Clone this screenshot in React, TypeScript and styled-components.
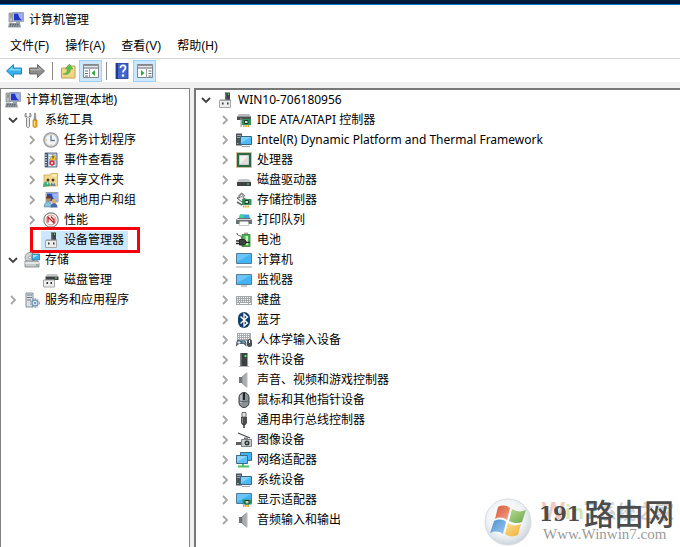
import React, { useState } from 'react';
import styled, { createGlobalStyle, css } from 'styled-components';

const Global = createGlobalStyle`
  *, *::before, *::after { box-sizing: border-box; }
  body {
    margin: 0;
    background: #f0f0f0;
    color: #000;
    font: 12px/20px "Noto Sans", "Noto Sans CJK SC", sans-serif;
  }
  button { font: inherit; color: inherit; border: 0; background: none; padding: 0; margin: 0; }
  ul { list-style: none; margin: 0; padding: 0; }
  h1 { font: inherit; margin: 0; }
`;

const Window = styled.div`
  position: relative;
  display: flex;
  flex-direction: column;
  min-height: 100vh;
  overflow: hidden;
`;

const Desktop = styled.div`
  height: 5px;
  background: #001a3c;
  border-bottom: 1px solid #0c7cd5;
`;

const TitleBar = styled.header`
  display: flex;
  align-items: center;
  gap: 5px;
  height: 29px;
  padding-left: 8px;
  background: #fff;
`;

const MenuBar = styled.nav`
  display: flex;
  gap: 16px;
  height: 24px;
  padding-left: 10px;
  background: #fff;
  font-family: "Liberation Sans", "Noto Sans CJK SC", sans-serif;
`;

const MenuButton = styled.button`
  height: 24px;
  white-space: nowrap;
`;

const ToolBar = styled.div`
  display: flex;
  align-items: center;
  height: 24px;
  padding-left: 2px;
  background: #fff;
  border-top: 1px solid #d4d4d4;
`;

const ToolButton = styled.button<{ $on?: boolean }>`
  display: grid;
  place-items: center;
  width: 23px;
  height: 22px;
  ${(p) => p.$on && css`
    background: #cce8ff;
    border: 1px solid #99d1ff;
  `}
`;

const Divider = styled.span`
  width: 1px;
  height: 18px;
  margin: 0 3px 0 4px;
  background: #8c8c8c;
`;

const Panes = styled.main`
  flex: 1;
  display: flex;
  gap: 4px;
  padding-top: 6px;
`;

const SidePane = styled.section`
  flex: 0 0 190px;
  padding: 1px 0 0 4px;
  background: #fff;
  border: 1px solid #828282;
  border-bottom: 0;
`;

const MainPane = styled.section`
  flex: 1;
  min-width: 0;
  padding: 0 0 0 2px;
  background: #fff;
  border: 2px solid #777;
  border-right: 0;
  border-bottom: 0;
`;

const Branch = styled.ul`
  padding-left: 19px;
`;

const Row = styled.div`
  display: flex;
  align-items: center;
  height: 20px;
  white-space: nowrap;
`;

const Toggle = styled.button<{ $open: boolean }>`
  flex: 0 0 19px;
  height: 20px;
  padding: 0 0 0 2px;
  color: ${(p) => (p.$open ? '#404040' : '#a6a6a6')};
  svg { display: block; transform: ${(p) => (p.$open ? 'rotate(90deg)' : 'none')}; }
`;

const Spacer = styled.span`
  flex: 0 0 19px;
`;

const Item = styled.span<{ $selected?: boolean }>`
  position: relative;
  display: flex;
  align-items: center;
  gap: 5px;
  ${(p) => p.$selected && css`
    height: 19px;
    margin-left: -2px;
    padding: 0 4px 0 2px;
    background: #cce8ff;
  `}
`;

const Callout = styled.span`
  position: absolute;
  inset: -4px -12px -3px -11px;
  border: 3px solid #f6000c;
`;

const IconSvg = styled.svg`
  display: block;
  flex: none;
`;

const Watermark = styled.aside`
  position: absolute;
  right: 6px;
  bottom: 1px;
  display: flex;
  align-items: center;
  gap: 7px;
  pointer-events: none;
`;

const MarkText = styled.div`
  display: flex;
  flex-direction: column;
  padding-bottom: 4px;
`;

const MarkTitle = styled.div`
  position: relative;
  display: flex;
  align-items: center;
  height: 28px;
  color: #4c4c4c;
  font: 500 30px/28px "Noto Sans CJK SC", sans-serif;
`;

const MarkNumber = styled.span`
  width: 45px;
  padding-top: 4px;
  font: bold 20px/28px "DejaVu Serif", serif;
`;

const MarkGhost = styled.span`
  position: absolute;
  right: 0;
  top: -2px;
  white-space: nowrap;
  color: #d2d2d2;
  font: bold 19px/28px "Open Sans", "Noto Sans CJK SC", sans-serif;
  z-index: -1;
`;

const GhostWin = styled.span`
  color: #f3c9bd;
  font-size: 24px;
`;

const GhostN = styled.span`
  color: #d6e6b4;
  font-size: 20px;
`;

const GhostSeven = styled.span`
  color: #9ed4ee;
  font-size: 24px;
`;

const MarkLayer = styled.div`
  isolation: isolate;
`;

const MarkUrl = styled.div`
  padding-left: 4px;
  color: #9a9a9a;
  font: 15px/16px "Liberation Serif", serif;
`;

type IconName =
  | 'computer' | 'tools' | 'clock' | 'events' | 'shared' | 'users' | 'perf' | 'device'
  | 'storage' | 'disk' | 'services' | 'ide' | 'system' | 'cpu' | 'drive' | 'controller'
  | 'printer' | 'battery' | 'pc' | 'monitor' | 'keyboard' | 'bluetooth' | 'hid' | 'software'
  | 'speaker' | 'mouse' | 'usb' | 'camera' | 'network' | 'display'
  | 'back' | 'forward' | 'up' | 'paneLeft' | 'help' | 'paneRight';

const art: Record<IconName, React.ReactNode> = {
  computer: (
    <>
      <path d="M1 1h4v9H1z" fill="#b9bdc2" stroke="#7c8187" strokeWidth=".7" />
      <path d="M2 3h2M2 5h2" stroke="#666" strokeWidth=".8" />
      <path d="M5 .5h10.500v9H5z" fill="#d9dde4" stroke="#8b93a3" strokeWidth=".8" />
      <path d="M6 1.500h8.500v7H6z" fill="#2036c8" />
      <path d="M10 1.500h4.500v7c-2-1-3.500-3-4.500-7z" fill="#a3b6f4" />
      <path d="M8 9.500h4V11H8z" fill="#9da3ab" />
      <path d="M1 11h11l1 4.500H0z" fill="#9aa0a8" />
      <path d="M2 12.300h9M1.500 14h10" stroke="#4b525b" strokeDasharray="1.400 1" />
    </>
  ),
  tools: (
    <>
      <path d="M2 1C.5 2.500.5 5 2.500 6.200V14c0 2 3 2 3 0V6.200C7.500 5 7.500 2.500 6 1v3.500H5L4 5.500 3 4.500H2z" fill="#e8e8e8" stroke="#7d7d7d" strokeWidth=".9" />
      <path d="M10.500 1h1l.5 7h-2z" fill="#999" stroke="#777" strokeWidth=".5" />
      <path d="M9 8h4v6c0 2-4 2-4 0z" fill="#f2ad25" stroke="#b97812" strokeWidth=".7" />
      <path d="M10.500 9v5" stroke="#ffdf7c" />
    </>
  ),
  clock: (
    <>
      <circle cx="8" cy="8" r="7.800" fill="#8d9298" />
      <circle cx="8" cy="8" r="6.800" fill="#c6cacf" />
      <circle cx="8" cy="8" r="5.500" fill="#f4f5f6" />
      <path d="M8 3.500V8.500h4" fill="none" stroke="#66809c" strokeWidth="1.300" />
      <path d="M8 3v1M8 12.500v.8M3 8h1" stroke="#c39a3c" />
    </>
  ),
  events: (
    <>
      <path d="M2 1h12v14H2z" fill="#aecbed" stroke="#56677f" strokeWidth=".9" />
      <path d="M2 1h3v14H2z" fill="#49566b" />
      <path d="M1 3h3M1 5.500h3M1 8h3M1 10.500h3M1 13h3" stroke="#cfd6df" />
      <path d="M6 3.500h3M6 6h2M6 13.500h6" stroke="#fff" />
      <path d="M10 2l3.500 6h-7z" fill="#ffc928" stroke="#a87b0a" strokeWidth=".5" />
      <path d="M10 4v2.500" stroke="#222" />
      <circle cx="9" cy="11" r="2.700" fill="#d93434" />
      <path d="M8 10l2 2M10 10l-2 2" stroke="#fff" strokeWidth=".8" />
    </>
  ),
  shared: (
    <>
      <path d="M1 3h6l1-1.500h6.500V14H1z" fill="#f3d98c" stroke="#cfa850" strokeWidth=".8" />
      <path d="M9 2.500h4.500v2H9z" fill="#fff3c5" />
      <circle cx="5" cy="8" r="1.500" fill="#4a3a26" />
      <circle cx="10" cy="8" r="1.500" fill="#4a3a26" />
      <path d="M0 15c0-7 6.500-7 7.500-1z" fill="#43ad7b" />
      <path d="M7.500 14c0-5 4.500-5 5 0z" fill="#6a86a0" />
      <path d="M3.500 10.500l1 2 1-2M9 10.500l1 2 1-2" fill="#fff" />
    </>
  ),
  users: (
    <>
      <path d="M3 .5h12v9.500H3z" fill="#c9d3e4" stroke="#7e8ba0" strokeWidth=".8" />
      <path d="M4 1.500h10V9H4z" fill="#2546c9" />
      <path d="M9 1.500h5V9c-3-1-5-4-5-7.500z" fill="#9db4f0" />
      <circle cx="5.500" cy="7" r="2.400" fill="#ba8958" />
      <path d="M3 6.500c0-4 5-4 5 0z" fill="#624225" />
      <path d="M1 15c0-7 8-7 8 0z" fill="#8ac1dd" stroke="#466f91" strokeWidth=".5" />
      <circle cx="11" cy="9" r="2.300" fill="#dcb060" />
      <path d="M7.500 15.500c0-6 7-6 7 0z" fill="#4a68a8" />
    </>
  ),
  perf: (
    <>
      <circle cx="8" cy="8" r="7.200" fill="#fff" stroke="#858585" strokeWidth="1.200" />
      <circle cx="8" cy="8" r="5" fill="#fff" stroke="#d78b8b" />
      <path d="M4.500 4.500l7 7M5 5.500v5M11 6.500v4M8 4.500l2.500 3" stroke="#c21f29" strokeWidth="1.300" />
    </>
  ),
  device: (
    <>
      <path d="M8 .5h5v8H8z" fill="#3f4446" />
      <path d="M8 .5h1.500v8H8z" fill="#6a7072" />
      <path d="M11 1.500h1v1.500h-1z" fill="#5bd65b" />
      <path d="M3 7.500h11V9H3z" fill="#85898b" />
      <path d="M2.500 8.500h11v7h-11z" fill="#ededed" stroke="#a6a6a6" />
      <path d="M5 10.500h1.500v2H5zM10 10.500h1.500v2H10z" fill="#333" />
    </>
  ),
  storage: (
    <>
      <circle cx="6" cy="5.500" r="5" fill="#d2d5d7" stroke="#808487" strokeWidth=".8" />
      <circle cx="6" cy="5.500" r="1.500" fill="#fff" stroke="#888" strokeWidth=".7" />
      <path d="M1 9h13l1 2v4H1z" fill="#c7cbcd" stroke="#777c7f" strokeWidth=".8" />
      <path d="M1 11h14" stroke="#fff" />
      <path d="M12 12.500h2v1h-2z" fill="#3aa844" />
      <path d="M8 2h7.500v6H8z" fill="#3caee5" stroke="#446e87" strokeWidth=".8" />
      <path d="M9 3h5L9 6z" fill="#aee3fa" />
    </>
  ),
  disk: (
    <>
      <path d="M4 2h10l1.500 2.500h-13z" fill="#c5c8ca" />
      <path d="M2.500 4.500h13V8h-13z" fill="#3e4144" />
      <path d="M12 6h2" stroke="#6be06b" />
      <path d="M.5 8h11v7H.5z" fill="#ededed" stroke="#a6a6a6" />
      <path d="M3.500 10h1.500v2H3.500zM7.500 10h1.500v2H7.500z" fill="#333" />
    </>
  ),
  services: (
    <>
      <path d="M2 1h7v14H2z" fill="#dce0e3" stroke="#80878d" strokeWidth=".9" />
      <path d="M3 3h5M3 5.500h5M3 8h4" stroke="#71787e" />
      <circle cx="11" cy="11" r="3" fill="#d8e7f5" stroke="#7497b7" strokeWidth="1.300" />
      <circle cx="11" cy="11" r="4.500" fill="none" stroke="#7497b7" strokeDasharray="1.500 1.400" />
      <circle cx="11" cy="11" r="1" fill="#5b7c9b" />
    </>
  ),
  ide: (
    <>
      <path d="M3 2h10l2 2.500H1z" fill="#b7bbbd" />
      <path d="M1 4.500h14V8H1z" fill="#4b4f52" />
      <path d="M5.500 7H15v6H5.500z" fill="#2f9460" />
      <path d="M8.500 8.500h3.500v3H8.500z" fill="#d6dbd8" stroke="#153f28" />
      <path d="M7 14h7" stroke="#e3a128" strokeWidth="2" strokeDasharray="1.500 .8" />
      <path d="M5 6v9" stroke="#8e9492" />
    </>
  ),
  system: (
    <>
      <path d="M0 1.500h6v12H0z" fill="#4b535a" />
      <path d="M1 3.500h4M1 5.500h4" stroke="#9da4aa" />
      <path d="M1 11.500h1.500" stroke="#6be36b" />
      <path d="M4.500 4.500h11v8h-11z" fill="#4db8f4" stroke="#39647e" />
      <path d="M5 5h10L5 11z" fill="#83d1fa" />
      <path d="M6 14.500h8" stroke="#a0a8ad" />
    </>
  ),
  cpu: (
    <>
      <path d="M1 1h14v14H1z" fill="#2d6846" />
      <path d="M.5.5h15v15H.5z" fill="none" stroke="#9c813d" strokeDasharray="1 1" />
      <path d="M3.500 3.500h9v9h-9z" fill="#f0f1f0" stroke="#c9cfca" />
      <path d="M12 4v8H4z" fill="#dcdfdc" />
    </>
  ),
  drive: (
    <>
      <path d="M3 7h10l2 3H1z" fill="#c5c8ca" />
      <path d="M1 10h14v4H1z" fill="#3f4346" />
      <path d="M11 12h2" stroke="#65d86b" />
    </>
  ),
  controller: (
    <>
      <path d="M5.500 1l3 2.500-1.500 2.500 4 1.500-1 2-3 1.500L1 6l3-.5L2.500 4z" fill="#ececec" stroke="#4d4d4d" strokeWidth=".9" />
      <circle cx="5.500" cy="3.500" r="1.200" fill="#fff" stroke="#555" strokeWidth=".7" />
      <path d="M1 10l5 3" stroke="#626262" strokeWidth="1.500" />
      <path d="M6 7h9.500v6H6z" fill="#2f9460" />
      <path d="M9 8.500h3.500v3H9z" fill="#d2ddd4" stroke="#17432a" />
      <path d="M7 14.500h6" stroke="#e3a128" strokeWidth="2" strokeDasharray="1.500 .7" />
    </>
  ),
  printer: (
    <>
      <path d="M4 2.500h9l1 4H3z" fill="#38a4e8" />
      <path d="M4 2.500h4v4H3z" fill="#3fcf91" />
      <path d="M2 6h12l2 2v4H0V8z" fill="#6b7174" />
      <path d="M1 7.500h14" stroke="#d2d5d7" />
      <path d="M4 9.500h8l1 4H3z" fill="#fff" stroke="#b5b5b5" strokeWidth=".7" />
    </>
  ),
  battery: (
    <>
      <path d="M8 .5h4v2H8z" fill="#aaa" />
      <path d="M6 2.500h8v12H6z" fill="#4fb751" stroke="#36783a" strokeWidth=".8" />
      <path d="M9.500 4h2.500v9H9.500z" fill="#c9f2bf" />
      <path d="M1 1c0 4 5 1 5 6" fill="none" stroke="#4b4b4b" />
      <path d="M3.500 7.500h4c3.500 0 3.500 5.500 0 5.500h-4z" fill="#3d4140" stroke="#242726" />
      <path d="M0 9h3.500M0 11.500h3.500M10 10.300h4" stroke="#242726" strokeWidth="1.300" />
    </>
  ),
  pc: (
    <>
      <path d="M.5 1.500h15v10H.5z" fill="#43b4f3" stroke="#527c96" />
      <path d="M1 2h14L1 10z" fill="#6cc5f8" />
      <path d="M0 15h16" stroke="#9da4a9" />
    </>
  ),
  monitor: (
    <>
      <path d="M.5 2.500h15v10H.5z" fill="#43b4f3" stroke="#527c96" />
      <path d="M1 3h14L1 11z" fill="#6cc5f8" />
      <path d="M5 14h6" stroke="#929a9f" />
    </>
  ),
  keyboard: (
    <>
      <path d="M0 4h16v9H0z" fill="#a3a8ac" />
      <path d="M1 5.500h14M1 7.500h14M1 9.500h14" stroke="#eff0f0" strokeDasharray="1 1" />
      <path d="M1 11.500h2M4 11.500h8M13 11.500h2" stroke="#fff" />
    </>
  ),
  bluetooth: (
    <>
      <rect x="2" width="12" height="16" rx="6" fill="#113d70" />
      <path d="M4.500 4.500l7 6.500-3.500 3V2l3.500 3-7 6.500" fill="none" stroke="#fff" strokeWidth="1.300" />
    </>
  ),
  hid: (
    <>
      <path d="M1 1h14v8H1z" fill="#a7adb1" />
      <path d="M2 2.500h12M2 4.500h12M2 6.500h12" stroke="#fff" strokeDasharray="1 1" />
      <path d="M0 14.500c0-8 3-7 4-6h3c2-1 4 1 3.500 6L7.500 12H3z" fill="#59636e" />
      <path d="M3 9v3M1.500 10.500h3" stroke="#e3e8ed" />
      <circle cx="7.500" cy="10" r="1.200" fill="#40a6e5" />
      <rect x="11" y="7" width="5" height="8" rx="2.500" fill="#4a4f53" />
      <path d="M13.500 8v3" stroke="#fff" />
    </>
  ),
  software: (
    <>
      <path d="M4.500 1h7v13h-7z" fill="#3b4143" />
      <path d="M4.500 1H6v13H4.500z" fill="#5b6262" />
      <path d="M8.500 3h2v2h-2z" fill="#57e35b" />
      <path d="M3 14.500h10" stroke="#b3b3b3" />
    </>
  ),
  speaker: (
    <>
      <path d="M3 5h3v6H3z" fill="#6d7275" />
      <path d="M6 5l4.500-4v14L6 11z" fill="#a9adaf" stroke="#777c7f" strokeWidth=".7" />
      <path d="M11 .5v15" stroke="#c6c9cb" strokeWidth="1.300" />
    </>
  ),
  mouse: (
    <>
      <rect x="3" y=".5" width="10" height="15" rx="5" fill="#8a9299" stroke="#33383d" />
      <path d="M5 3v8" stroke="#dce1e5" />
      <path d="M8 1v7" stroke="#22272b" strokeWidth="2" />
      <path d="M4 9c2 1 6 1 8 0" fill="none" stroke="#565d64" />
    </>
  ),
  usb: (
    <>
      <path d="M6 .5h4V5H6z" fill="#e3e3e3" stroke="#6e6e6e" />
      <path d="M5 5h6v6l-1.500 2h-3L5 11z" fill="#4b4d4f" />
      <path d="M8 12v4" stroke="#353535" strokeWidth="1.500" />
      <path d="M6.500 6v5" stroke="#8b8d8f" />
    </>
  ),
  camera: (
    <>
      <path d="M2 1l12 5" stroke="#474b4d" strokeWidth="1.300" />
      <path d="M0 10h6v3H0z" fill="#5d6163" />
      <path d="M8 5.500h4v2H8z" fill="#777b7e" />
      <path d="M5.500 7.500h10v7h-10z" fill="#c9cccd" stroke="#7c8184" />
      <circle cx="11" cy="11" r="2.500" fill="#333" />
      <circle cx="11" cy="11" r="1" fill="#9bd0e8" />
    </>
  ),
  network: (
    <>
      <path d="M4.500.5h11v8h-11z" fill="#43b4f3" stroke="#416a83" />
      <path d="M.5 3.500h11v8H.5z" fill="#5cc0f7" stroke="#416a83" />
      <path d="M1 4h10L1 10z" fill="#8dd5fb" />
      <path d="M7 12v2M2 14.500h11" stroke="#4fc063" strokeWidth="2" />
    </>
  ),
  display: (
    <>
      <path d="M.5 1.500h15v10H.5z" fill="#43b4f3" stroke="#527c96" />
      <path d="M1 2h14L1 10z" fill="#6cc5f8" />
      <path d="M6.500 7.500h9v5h-9z" fill="#2f9460" />
      <path d="M9 8.500h4V12H9z" fill="#bdd4c3" stroke="#17432a" />
      <path d="M7 14h6" stroke="#e3a128" strokeWidth="2" strokeDasharray="1.500 .7" />
    </>
  ),
  back: (
    <>
      <path d="M.5 8L7.500 1.500V5h8v6h-8v3.500z" fill="#35b0ea" stroke="#2487bd" strokeLinejoin="round" />
      <path d="M2.500 7.500l4-3.500v2h8v1.500z" fill="#86d6f8" />
    </>
  ),
  forward: (
    <>
      <path d="M15.500 8L8.500 1.500V5h-8v6h8v3.500z" fill="#8b8b8b" stroke="#6c6c6c" strokeLinejoin="round" />
      <path d="M13.500 7.500l-4-3.500v2h-8v1.500z" fill="#adadad" />
    </>
  ),
  up: (
    <>
      <path d="M1.500 5h5l1-2H15v12H1.500z" fill="#f0d685" stroke="#c5a24c" />
      <path d="M10 4h4v2h-4z" fill="#fff4cc" />
      <path d="M3 11c3 0 4.500-2 4.500-5H5.500L9.500 1 13 6h-2.500c0 4-3 6.500-7.500 5z" fill="#5cc24e" stroke="#3f9a38" strokeWidth=".5" />
    </>
  ),
  paneLeft: (
    <>
      <path d="M.5 1.500h15v13H.5z" fill="#fff" stroke="#818488" />
      <path d="M0 2.500h16M1 5h14" stroke="#8f9499" strokeWidth="1.500" />
      <path d="M2 8h3M2 10.500h3M2 13h3" stroke="#53708d" />
      <path d="M6.500 6v8.500" stroke="#9b9fa3" />
      <path d="M12 7v6l-3.500-3z" fill="#36a83b" />
    </>
  ),
  paneRight: (
    <>
      <path d="M.5 1.500h15v13H.5z" fill="#fff" stroke="#818488" />
      <path d="M0 2.500h16M1 5h14" stroke="#8f9499" strokeWidth="1.500" />
      <path d="M11.500 8h3M11.500 10.500h3M11.500 13h3" stroke="#53708d" />
      <path d="M9.500 6v8.500" stroke="#9b9fa3" />
      <path d="M4 7v6l3.500-3z" fill="#36a83b" />
    </>
  ),
  help: (
    <>
      <path d="M2 0h12v16H2z" fill="#4467cc" stroke="#203984" strokeWidth=".8" />
      <path d="M2 0h2v16H2z" fill="#1f3a8d" />
      <path d="M6.500 5c0-4 5.500-3 5 0-.3 2-2.500 2-2.500 4.500" fill="none" stroke="#fff" strokeWidth="1.700" />
      <circle cx="9" cy="12.500" r="1.200" fill="#fff" />
    </>
  ),
};

const Icon = ({ name }: { name: IconName }) => (
  <IconSvg width="16" height="16" viewBox="0 0 16 16" aria-hidden="true">{art[name]}</IconSvg>
);

interface Node {
  label: string;
  icon: IconName;
  open?: boolean;
  selected?: boolean;
  children?: Node[];
}

const leaf = (icon: IconName, label: string): Node => ({ icon, label, children: [] });

const consoleTree: Node[] = [
  {
    icon: 'tools', label: '系统工具', open: true,
    children: [
      leaf('clock', '任务计划程序'),
      leaf('events', '事件查看器'),
      leaf('shared', '共享文件夹'),
      leaf('users', '本地用户和组'),
      leaf('perf', '性能'),
      { icon: 'device', label: '设备管理器', selected: true },
    ],
  },
  { icon: 'storage', label: '存储', open: true, children: [{ icon: 'disk', label: '磁盘管理' }] },
  leaf('services', '服务和应用程序'),
];

const deviceTree: Node[] = [
  {
    icon: 'device', label: 'WIN10-706180956', open: true,
    children: [
      leaf('ide', 'IDE ATA/ATAPI 控制器'),
      leaf('system', 'Intel(R) Dynamic Platform and Thermal Framework'),
      leaf('cpu', '处理器'),
      leaf('drive', '磁盘驱动器'),
      leaf('controller', '存储控制器'),
      leaf('printer', '打印队列'),
      leaf('battery', '电池'),
      leaf('pc', '计算机'),
      leaf('monitor', '监视器'),
      leaf('keyboard', '键盘'),
      leaf('bluetooth', '蓝牙'),
      leaf('hid', '人体学输入设备'),
      leaf('software', '软件设备'),
      leaf('speaker', '声音、视频和游戏控制器'),
      leaf('mouse', '鼠标和其他指针设备'),
      leaf('usb', '通用串行总线控制器'),
      leaf('camera', '图像设备'),
      leaf('network', '网络适配器'),
      leaf('system', '系统设备'),
      leaf('display', '显示适配器'),
      leaf('speaker', '音频输入和输出'),
    ],
  },
];

const TreeNode = ({ node }: { node: Node }) => {
  const [open, setOpen] = useState(!!node.open);
  return (
    <li role="treeitem" aria-expanded={node.children ? open : undefined} aria-selected={!!node.selected}>
      <Row>
        {node.children ? (
          <Toggle $open={open} aria-label={node.label} onClick={() => setOpen(!open)}>
            <IconSvg width="12" height="12" viewBox="0 0 12 12" aria-hidden="true">
              <path d="M4 2l4 4-4 4" fill="none" stroke="currentColor" strokeWidth="1.800" />
            </IconSvg>
          </Toggle>
        ) : <Spacer />}
        <Item $selected={node.selected}>
          <Icon name={node.icon} />
          <span>{node.label}</span>
          {node.selected && <Callout />}
        </Item>
      </Row>
      {open && node.children && node.children.length > 0 && (
        <Branch role="group">
          {node.children.map((c) => <TreeNode key={c.label} node={c} />)}
        </Branch>
      )}
    </li>
  );
};

const menus = ['文件(F)', '操作(A)', '查看(V)', '帮助(H)'];

const WindowsOrb = () => (
  <IconSvg width="48" height="48" viewBox="0 0 48 48" aria-hidden="true">
    <defs>
      <radialGradient id="glass" cx="45%" cy="40%" r="60%">
        <stop offset="0" stopColor="#fff" />
        <stop offset=".65" stopColor="#f1f4f6" />
        <stop offset="1" stopColor="#cdd5db" />
      </radialGradient>
      <linearGradient id="red" x2="1" y2="1"><stop stopColor="#d9573d" /><stop offset="1" stopColor="#f3a183" /></linearGradient>
      <linearGradient id="green" x2="1" y2="1"><stop stopColor="#b7db92" /><stop offset="1" stopColor="#6aa84c" /></linearGradient>
      <linearGradient id="blue" x2="1" y2="1"><stop stopColor="#4c8fd0" /><stop offset="1" stopColor="#9ccbf0" /></linearGradient>
      <linearGradient id="gold" x2="1" y2="1"><stop stopColor="#fbe08a" /><stop offset="1" stopColor="#efb03c" /></linearGradient>
    </defs>
    <circle cx="24" cy="24" r="23" fill="url(#glass)" stroke="#d5dbe0" />
    <path d="M14 9c4-2 8-2 12 1l-3 12c-4-3-8-3-12-1z" fill="url(#red)" />
    <path d="M28 11c5 3 9 3 14 1l-4 12c-4 2-9 1-13-1z" fill="url(#green)" />
    <path d="M10 23c5-2 9-2 12 1l-3 12c-4-3-8-3-13-1z" fill="url(#blue)" />
    <path d="M24 25c4 3 9 3 13 1l-3 11c-4 2-9 2-13-1z" fill="url(#gold)" />
  </IconSvg>
);

export default function App() {
  return (
    <>
      <Global />
      <Window>
        <Desktop />
        <TitleBar>
          <Icon name="computer" />
          <h1>计算机管理</h1>
        </TitleBar>
        <MenuBar>
          {menus.map((m) => <MenuButton key={m}>{m}</MenuButton>)}
        </MenuBar>
        <ToolBar role="toolbar">
          <ToolButton aria-label="后退"><Icon name="back" /></ToolButton>
          <ToolButton aria-label="前进"><Icon name="forward" /></ToolButton>
          <Divider />
          <ToolButton aria-label="向上"><Icon name="up" /></ToolButton>
          <ToolButton $on aria-label="控制台树"><Icon name="paneLeft" /></ToolButton>
          <Divider />
          <ToolButton aria-label="帮助"><Icon name="help" /></ToolButton>
          <ToolButton $on aria-label="操作窗格"><Icon name="paneRight" /></ToolButton>
        </ToolBar>
        <Panes>
          <SidePane>
            <Row>
              <Item>
                <Icon name="computer" />
                <span>计算机管理(本地)</span>
              </Item>
            </Row>
            <ul role="tree" aria-label="计算机管理(本地)">
              {consoleTree.map((n) => <TreeNode key={n.label} node={n} />)}
            </ul>
          </SidePane>
          <MainPane>
            <ul role="tree" aria-label="设备管理器">
              {deviceTree.map((n) => <TreeNode key={n.label} node={n} />)}
            </ul>
          </MainPane>
        </Panes>
        <Watermark>
          <WindowsOrb />
          <MarkText>
            <MarkLayer>
              <MarkTitle>
                <MarkGhost><GhostWin>W</GhostWin><GhostN>in</GhostN><GhostSeven>7</GhostSeven>系统之家</MarkGhost>
                <MarkNumber>191</MarkNumber>路由网
              </MarkTitle>
            </MarkLayer>
            <MarkUrl>Www.Winwin7.com</MarkUrl>
          </MarkText>
        </Watermark>
      </Window>
    </>
  );
}
